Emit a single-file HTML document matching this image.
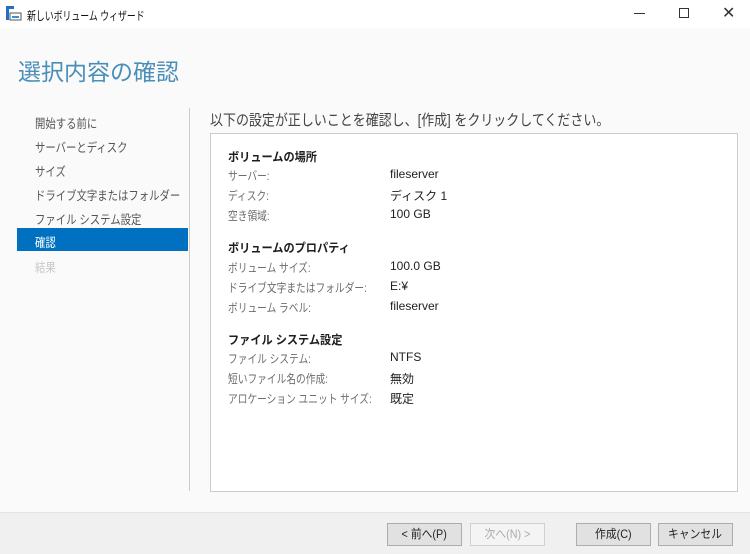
<!DOCTYPE html>
<html><head><meta charset="utf-8"><style>
*{margin:0;padding:0;box-sizing:border-box}
body{width:750px;height:554px;overflow:hidden;background:#fafafa;font-family:"Liberation Sans","Noto Sans CJK JP",sans-serif;position:relative;color:#1e1e1e}
.a{position:absolute;white-space:nowrap;transform-origin:0 0}
.t{font-size:12px}
.nav{font-size:12.5px;color:#555;left:35px;transform:scaleX(.83)}
.lbl{left:228px;font-size:12px;color:#6d6d6d;transform:scaleX(.81)}
.val{left:390px;font-size:12px;color:#1e1e1e}
.hd{left:228px;font-size:12px;font-weight:bold;color:#1e1e1e;transform:scaleX(.93)}
.btn{position:absolute;top:523px;height:23px;border:1px solid #adadad;background:#e1e1e1;font-size:12px;text-align:center;line-height:21px;color:#222}
.btn span{display:inline-block;transform:scaleX(.9)}
</style></head><body>
<div class="a" style="left:0;top:0;width:750px;height:28px;background:#fff"></div>
<svg class="a" style="left:6px;top:6px" width="16" height="16"><rect x="0" y="0" width="3" height="14" fill="#1f6fc4"/><rect x="0" y="0" width="8" height="3" fill="#1f6fc4"/><rect x="4" y="7" width="11" height="7" fill="#fff" stroke="#555"/><rect x="6" y="10" width="7" height="2" fill="#3a8fd8"/></svg>
<div class="a t" style="left:27px;top:7px;color:#111;transform:scaleX(.74)">新しいボリューム ウィザード</div>
<div class="a" style="left:634px;top:13px;width:11px;height:1px;background:#333"></div>
<div class="a" style="left:679px;top:8px;width:10px;height:10px;border:1px solid #333"></div>
<div class="a" style="left:722px;top:3px;font-size:16px;color:#333">✕</div>
<div class="a" style="left:18px;top:53px;font-size:23px;color:#4a8fb8">選択内容の確認</div>
<div class="a nav" style="top:113px">開始する前に</div>
<div class="a nav" style="top:137px">サーバーとディスク</div>
<div class="a nav" style="top:161px">サイズ</div>
<div class="a nav" style="top:185px">ドライブ文字またはフォルダー</div>
<div class="a nav" style="top:209px">ファイル システム設定</div>
<div class="a" style="left:17px;top:228px;width:171px;height:23px;background:#0070c0"></div>
<div class="a nav" style="top:232px;color:#fff">確認</div>
<div class="a nav" style="top:257px;color:#c8c8c8">結果</div>
<div class="a" style="left:189px;top:108px;width:1px;height:383px;background:#ccc"></div>
<div class="a" style="left:210px;top:109px;font-size:15px;color:#444;transform:scaleX(.865)">以下の設定が正しいことを確認し、[作成] をクリックしてください。</div>
<div class="a" style="left:210px;top:133px;width:528px;height:359px;background:#fff;border:1px solid #ccc"></div>
<div class="a hd" style="top:148px">ボリュームの場所</div>
<div class="a lbl" style="top:167px">サーバー:</div><div class="a val" style="top:167px">fileserver</div>
<div class="a lbl" style="top:187px">ディスク:</div><div class="a val" style="top:187px">ディスク 1</div>
<div class="a lbl" style="top:207px">空き領域:</div><div class="a val" style="top:207px">100 GB</div>
<div class="a hd" style="top:239px">ボリュームのプロパティ</div>
<div class="a lbl" style="top:259px">ボリューム サイズ:</div><div class="a val" style="top:259px">100.0 GB</div>
<div class="a lbl" style="top:279px">ドライブ文字またはフォルダー:</div><div class="a val" style="top:279px">E:¥</div>
<div class="a lbl" style="top:299px">ボリューム ラベル:</div><div class="a val" style="top:299px">fileserver</div>
<div class="a hd" style="top:331px">ファイル システム設定</div>
<div class="a lbl" style="top:350px">ファイル システム:</div><div class="a val" style="top:350px">NTFS</div>
<div class="a lbl" style="top:370px">短いファイル名の作成:</div><div class="a val" style="top:370px">無効</div>
<div class="a lbl" style="top:390px">アロケーション ユニット サイズ:</div><div class="a val" style="top:390px">既定</div>
<div class="a" style="left:0;top:512px;width:750px;height:42px;background:#f0f0f0;border-top:1px solid #e3e3e3"></div>
<div class="btn" style="left:387px;width:75px"><span>&lt; 前へ(P)</span></div>
<div class="btn" style="left:470px;width:75px;background:#f4f4f4;border-color:#d0d0d0;color:#aaa"><span>次へ(N) &gt;</span></div>
<div class="btn" style="left:576px;width:75px"><span>作成(C)</span></div>
<div class="btn" style="left:658px;width:75px"><span>キャンセル</span></div>
</body></html>
